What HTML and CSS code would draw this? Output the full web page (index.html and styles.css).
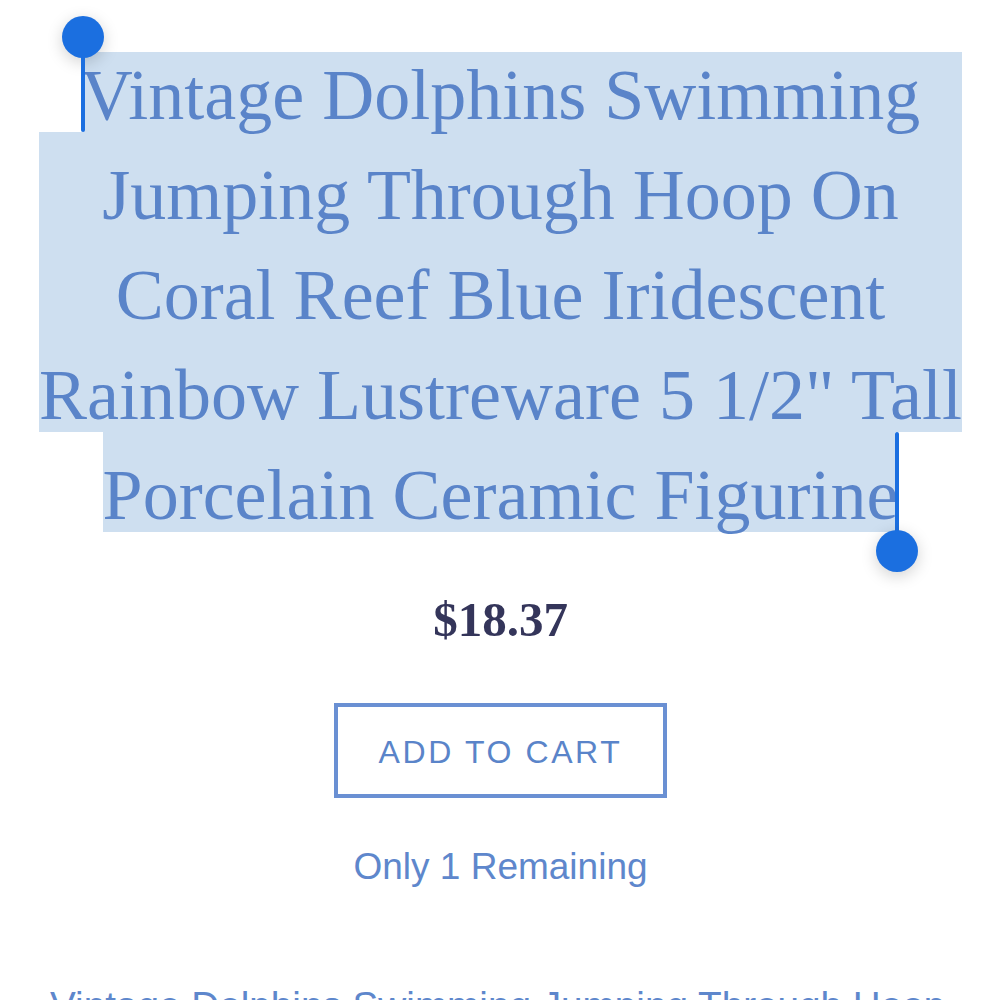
FILE: index.html
```html
<!DOCTYPE html>
<html>
<head>
<meta charset="utf-8">
<link rel="stylesheet" href="styles.css">
</head>
<body>
<main class="product">
  <h1 class="title">
    <svg class="selection" width="923" height="489" viewBox="0 0 923 489" aria-hidden="true">
      <path d="M44 9 H923 V389 H856 V489 H64 V389 H0 V89 H44 Z" fill="#cedff0"/>
    </svg>
    Vintage Dolphins Swimming Jumping Through Hoop On Coral Reef Blue Iridescent Rainbow Lustreware 5 1/2" Tall Porcelain Ceramic Figurine
    <span class="handle handle-start"><span class="knob"></span><span class="stem"></span></span>
    <span class="handle handle-end"><span class="stem"></span><span class="knob"></span></span>
  </h1>
  <div class="price">$18.37</div>
  <button class="cart">ADD TO CART</button>
  <div class="stock">Only 1 Remaining</div>
  <p class="desc">Vintage Dolphins Swimming Jumping Through Hoop On Coral Reef Blue Iridescent Rainbow Lustreware 5 1/2" Tall Porcelain Ceramic Figurine</p>
</main>
</body>
</html>
```

FILE: styles.css
```css
html, body {
  margin: 0;
  padding: 0;
  background: #ffffff;
  overflow: hidden;
}

.product {
  display: flex;
  flex-direction: column;
  align-items: center;
  padding: 45px 38px 0 39px;
}

.title {
  position: relative;
  z-index: 0;
  width: 923px;
  margin: 0;
  font-family: "Liberation Serif", "Times New Roman", serif;
  font-weight: normal;
  font-size: 72px;
  line-height: 100px;
  color: #5a84c9;
  text-align: center;
}

.selection {
  position: absolute;
  left: 0;
  top: -2px;
  z-index: -1;
}

.handle {
  position: absolute;
  display: flex;
  flex-direction: column;
  align-items: center;
  width: 42px;
}

.handle-start {
  left: 23px;
  top: -29px;
}

.handle-end {
  left: 837px;
  top: 387px;
}

.knob {
  width: 42px;
  height: 42px;
  border-radius: 50%;
  background: #1b6fe0;
  box-shadow: 0 4px 16px rgba(0, 0, 0, 0.18);
}

.stem {
  width: 4px;
  background: #1b6fe0;
  border-radius: 2px;
}

.handle-start .knob { margin-bottom: -4px; }
.handle-start .stem { height: 78px; }
.handle-end .stem { height: 102px; margin-bottom: -4px; }

.price {
  margin-top: 47px;
  font-family: "Liberation Serif", "Times New Roman", serif;
  font-weight: bold;
  font-size: 49px;
  line-height: 56px;
  color: #34355a;
}

.cart {
  margin-top: 55px;
  width: 333px;
  height: 95px;
  box-sizing: border-box;
  border: 4px solid #6a90d3;
  background: #ffffff;
  font-family: "Liberation Sans", Arial, sans-serif;
  font-size: 32px;
  letter-spacing: 2.6px;
  color: #5a84c9;
  padding: 4px 0 0 0;
}

.stock {
  margin-top: 47px;
  font-family: "Liberation Sans", Arial, sans-serif;
  font-size: 37px;
  line-height: 44px;
  color: #5e87cc;
}

.desc {
  align-self: stretch;
  margin: 94px 0 0 11px;
  font-family: "Liberation Sans", Arial, sans-serif;
  font-size: 38.7px;
  line-height: 46px;
  color: #5e87cc;
}
```
